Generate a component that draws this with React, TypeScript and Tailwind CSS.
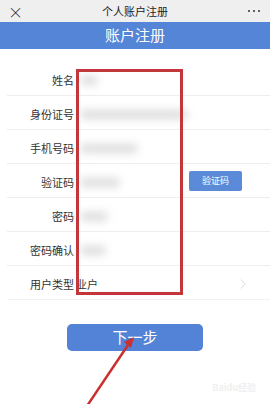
export default function App() {
  const rows = [
    { label: "姓名", blur: "w-[18px]" },
    { label: "身份证号", blur: "w-[108px]" },
    { label: "手机号码", blur: "w-[58px]" },
    { label: "验证码", blur: "w-[40px]", code: true },
    { label: "密码", blur: "w-[28px]" },
    { label: "密码确认", blur: "w-[26px]" },
  ];

  return (
    <div
      className="relative w-[270px] h-[404px] overflow-hidden bg-white text-[#333]"
      style={{ fontFamily: '"Noto Sans CJK SC", "Noto Sans", sans-serif' }}
    >
      {/* WECHAT TOP BAR */}
      <div className="h-[22px] bg-[#efeff0] flex items-center justify-between px-[8px] text-[#222]">
        <span className="text-[15px] leading-none font-light w-[20px]">×</span>
        <span className="text-[11px] leading-none">个人账户注册</span>
        <div className="w-[20px] flex justify-end gap-[3px] pr-[2px]">
          <span className="w-[2px] h-[2px] rounded-full bg-[#333]" />
          <span className="w-[2px] h-[2px] rounded-full bg-[#333]" />
          <span className="w-[2px] h-[2px] rounded-full bg-[#333]" />
        </div>
      </div>

      {/* BLUE HEADER */}
      <div className="h-[27px] bg-[#5485d6] flex items-center justify-center text-white text-[15px]">
        账户注册
      </div>

      {/* FORM */}
      <div className="mt-[13px]">
        {rows.map((row, i) => (
          <div key={i} className="ml-[7px] h-[34px] flex items-center pt-[3px] border-b border-[#eeeeee]">
            <div className="w-[67px] text-right text-[11px] leading-none">{row.label}</div>
            <div className="flex-1 flex items-center pl-[6px]">
              <div className={`${row.blur} h-[9px] rounded-full bg-[#dcdcdc] blur-[4px]`} />
            </div>
            {row.code && (
              <div className="mr-[28px] -mt-[3px] w-[53px] h-[20px] bg-[#5b8ad8] text-white text-[9px] flex items-center justify-center rounded-[2px]">
                验证码
              </div>
            )}
          </div>
        ))}
        <div className="ml-[7px] h-[34px] flex items-center pt-[3px] border-b border-[#f3f3f3]">
          <div className="w-[67px] text-right text-[11px] leading-none">用户类型</div>
          <div className="flex-1 pl-[2px] text-[11px] leading-none">业户</div>
          <svg viewBox="0 0 8 14" className="w-[6px] h-[12px] mr-[24px]" fill="none" stroke="#d0d0d0" strokeWidth="1">
            <polyline points="1 1 7 7 1 13" />
          </svg>
        </div>
      </div>

      {/* NEXT BUTTON */}
      <div className="flex justify-center mt-[24px]">
        <div className="w-[136px] h-[27px] bg-[#5383d6] rounded-[5px] flex items-center justify-center text-white text-[15px]">
          下一步
        </div>
      </div>

      {/* WATERMARK */}
      <div className="absolute right-[14px] bottom-[12px] text-[#efefef] text-[9px] leading-none font-bold">
        Baidu经验
      </div>

      {/* RED HIGHLIGHT BOX */}
      <div className="absolute left-[76px] top-[69px] w-[107px] h-[226px] border-[3px] border-[#c3363a]" />

      {/* RED ARROW */}
      <svg className="absolute left-0 top-0 w-[270px] h-[404px] pointer-events-none" viewBox="0 0 270 404">
        <line x1="87" y1="406" x2="128" y2="345" stroke="#c9302f" strokeWidth="2.5" />
        <polygon points="134,337 124,342 131,348" fill="#c9302f" />
      </svg>
    </div>
  );
}
